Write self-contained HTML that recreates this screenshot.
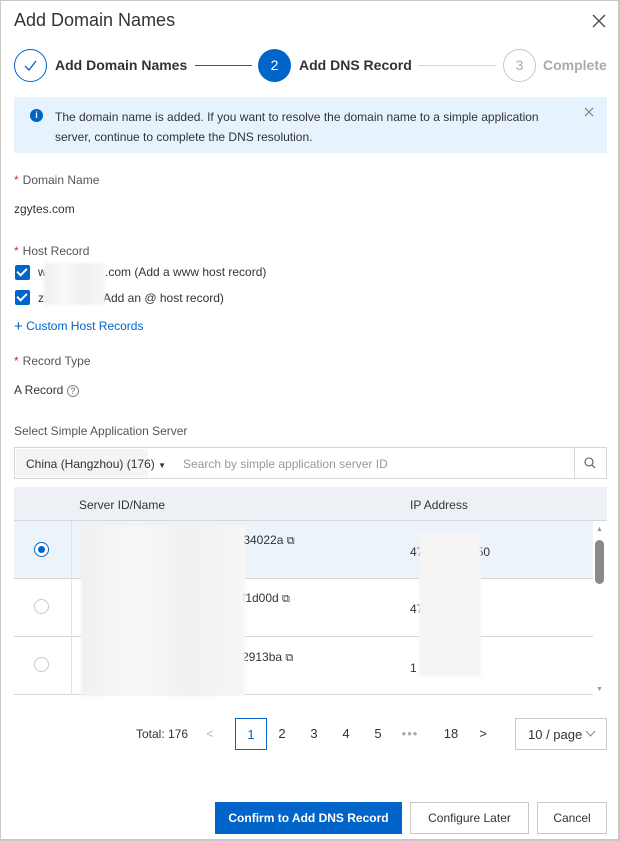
<!DOCTYPE html>
<html><head><meta charset="utf-8"><style>
*{box-sizing:border-box;margin:0;padding:0}
body{width:620px;height:841px;background:#fff;font-family:"Liberation Sans",sans-serif;color:#333;font-size:12px;position:relative;overflow:hidden}
.frame{position:absolute;inset:0;border:1px solid #c8c8c8;border-right:2px solid #c8c8c8;border-bottom:2px solid #c8c8c8}
.abs{position:absolute;white-space:nowrap}
.req{color:#d93026;margin-right:4px}
.lbl{color:#555;font-size:12px}
.cb{position:absolute;width:15px;height:15px;background:#0064c8;border-radius:2px}
.cb:after{content:"";position:absolute;left:4px;top:1px;width:4px;height:8px;border:solid #fff;border-width:0 2px 2px 0;transform:rotate(45deg)}
.radio{position:absolute;width:15px;height:15px;border-radius:50%;border:1px solid #c8c8c8;background:#fff}
.blur{position:absolute;background:linear-gradient(90deg,#f0f0f0,#f8f8f8,#f0f0f0,#f7f7f7);filter:blur(1px)}
.pg{position:absolute;top:718px;width:32px;height:32px;line-height:32px;text-align:center;font-size:13px;color:#333}
.btn{position:absolute;top:802px;height:32px;line-height:30px;text-align:center;font-size:12px;border:1px solid #c8c8c8;color:#333;background:#fff}
</style></head><body>
<div class="frame"></div>
<div class="abs" style="left:14px;top:10px;font-size:18px;color:#333">Add Domain Names</div>
<svg class="abs" style="left:592px;top:14px" width="14" height="14"><path d="M1 1L13 13M13 1L1 13" stroke="#555" stroke-width="1.5"/></svg>
<div class="abs" style="left:14px;top:49px;width:33px;height:33px;border:1.5px solid #0064c8;border-radius:50%"></div>
<svg class="abs" style="left:23px;top:58px" width="15" height="15"><path d="M2 8L6 12L13 3" stroke="#0064c8" stroke-width="1.3" fill="none"/></svg>
<div class="abs" style="left:55px;top:57px;font-size:14px;font-weight:bold;color:#333">Add Domain Names</div>
<div class="abs" style="left:195px;top:65px;width:57px;height:1px;background:#0064c8"></div>
<div class="abs" style="left:258px;top:49px;width:33px;height:33px;background:#0064c8;border-radius:50%;color:#fff;text-align:center;line-height:33px;font-size:14px">2</div>
<div class="abs" style="left:299px;top:57px;font-size:14px;font-weight:bold;color:#333">Add DNS Record</div>
<div class="abs" style="left:418px;top:65px;width:78px;height:1px;background:#d6d6d6"></div>
<div class="abs" style="left:503px;top:49px;width:33px;height:33px;border:1px solid #c8c8c8;border-radius:50%;color:#aaa;text-align:center;line-height:31px;font-size:14px">3</div>
<div class="abs" style="left:543px;top:57px;font-size:14px;font-weight:bold;color:#aaa">Complete</div>
<div class="abs" style="left:14px;top:97px;width:593px;height:56px;background:#e6f2fd"></div>
<div class="abs" style="left:30px;top:109px;width:13px;height:13px;border-radius:50%;background:#0064c8;color:#fff;font-size:9px;text-align:center;line-height:13px;font-weight:bold">i</div>
<div class="abs" style="left:55px;top:107px;font-size:12px;color:#333;line-height:20px">The domain name is added. If you want to resolve the domain name to a simple application<br>server, continue to complete the DNS resolution.</div>
<svg class="abs" style="left:584px;top:107px" width="10" height="10"><path d="M1 1L9 9M9 1L1 9" stroke="#777" stroke-width="1.1"/></svg>
<div class="abs lbl" style="left:14px;top:173px"><span class="req">*</span>Domain Name</div>
<div class="abs" style="left:14px;top:202px;color:#333">zgytes.com</div>
<div class="abs lbl" style="left:14px;top:244px"><span class="req">*</span>Host Record</div>
<div class="cb" style="left:15px;top:265px"></div>
<div class="abs" style="left:38px;top:265px">w</div>
<div class="abs" style="left:105px;top:265px">.com (Add a www host record)</div>
<div class="cb" style="left:15px;top:290px"></div>
<div class="abs" style="left:38px;top:291px">z</div>
<div class="abs" style="left:103px;top:291px">Add an @ host record)</div>
<div class="blur" style="left:44px;top:263px;width:61px;height:42px"></div>
<div class="abs" style="left:14px;top:318px;color:#0064c8"><span style="font-size:15px;vertical-align:-1px">+</span> Custom Host Records</div>
<div class="abs lbl" style="left:14px;top:354px"><span class="req">*</span>Record Type</div>
<div class="abs" style="left:14px;top:383px">A Record <span style="display:inline-block;width:12px;height:12px;border:1px solid #888;border-radius:50%;font-size:9px;text-align:center;line-height:10px;color:#666">?</span></div>
<div class="abs lbl" style="left:14px;top:424px">Select Simple Application Server</div>
<div class="abs" style="left:14px;top:447px;width:593px;height:32px;border:1px solid #d6d6d6"></div>
<div class="abs" style="left:16px;top:449px;width:132px;height:28px;background:#f3f4f6"></div>
<div class="abs" style="left:26px;top:457px">China (Hangzhou) (176) <span style="font-size:8px">▼</span></div>
<div class="abs" style="left:183px;top:457px;color:#999">Search by simple application server ID</div>
<div class="abs" style="left:574px;top:448px;width:1px;height:30px;background:#d6d6d6"></div>
<svg class="abs" style="left:584px;top:457px" width="12" height="12"><circle cx="5" cy="5" r="4" stroke="#555" fill="none" stroke-width="1.1"/><path d="M8 8L11 11" stroke="#555" stroke-width="1.1"/></svg>
<div class="abs" style="left:14px;top:487px;width:593px;height:34px;background:#edf0f5;border-bottom:1px solid #d6d6d6"></div>
<div class="abs" style="left:79px;top:498px;color:#333">Server ID/Name</div>
<div class="abs" style="left:410px;top:498px;color:#333">IP Address</div>
<div class="abs" style="left:14px;top:521px;width:579px;height:58px;background:#edf3fb;border-bottom:1px solid #d6d6d6"></div>
<div class="abs" style="left:14px;top:579px;width:579px;height:58px;border-bottom:1px solid #d6d6d6"></div>
<div class="abs" style="left:14px;top:637px;width:579px;height:58px;border-bottom:1px solid #d6d6d6"></div>
<div class="abs" style="left:71px;top:521px;width:1px;height:174px;background:#e3e3e3"></div>
<div class="radio" style="left:34px;top:542px;border-color:#0064c8"><div style="position:absolute;left:3px;top:3px;width:7px;height:7px;border-radius:50%;background:#0064c8"></div></div>
<div class="radio" style="left:34px;top:599px"></div>
<div class="radio" style="left:34px;top:657px"></div>
<div class="abs" style="left:240px;top:533px">:34022a <span style="font-size:11px">⧉</span></div>
<div class="abs" style="left:242px;top:591px">f1d00d <span style="font-size:11px">⧉</span></div>
<div class="abs" style="left:242px;top:650px">2913ba <span style="font-size:11px">⧉</span></div>
<div class="abs" style="left:410px;top:545px">47&nbsp;&nbsp;&nbsp;&nbsp;&nbsp;&nbsp;&nbsp;&nbsp;&nbsp;&nbsp;&nbsp;&nbsp;&nbsp;&nbsp;&nbsp;&nbsp;50</div>
<div class="abs" style="left:410px;top:602px">47</div>
<div class="abs" style="left:410px;top:661px">1</div>
<div class="blur" style="left:81px;top:526px;width:164px;height:170px"></div>
<div class="blur" style="left:419px;top:532px;width:62px;height:144px;background:#f5f5f5"></div>
<div class="abs" style="left:596px;top:526px;font-size:7px;color:#999">▲</div>
<div class="abs" style="left:595px;top:540px;width:9px;height:44px;background:#8a8a8a;border-radius:5px"></div>
<div class="abs" style="left:596px;top:686px;font-size:7px;color:#999">▼</div>
<div class="abs" style="left:136px;top:727px">Total: 176</div>
<div class="pg" style="left:194px;color:#bbb">&lt;</div>
<div class="pg" style="left:235px;border:1px solid #0064c8;color:#0064c8">1</div>
<div class="pg" style="left:266px">2</div>
<div class="pg" style="left:298px">3</div>
<div class="pg" style="left:330px">4</div>
<div class="pg" style="left:362px">5</div>
<div class="pg" style="left:394px;color:#aaa;letter-spacing:1px">•••</div>
<div class="pg" style="left:435px">18</div>
<div class="pg" style="left:467px">&gt;</div>
<div class="abs" style="left:515px;top:718px;width:92px;height:32px;border:1px solid #c8c8c8"></div>
<div class="abs" style="left:528px;top:727px;font-size:13px">10 / page</div>
<svg class="abs" style="left:585px;top:730px" width="11" height="7"><path d="M1 1L5.5 6L10 1" stroke="#888" fill="none"/></svg>
<div class="btn" style="left:215px;width:187px;background:#0064c8;border-color:#0064c8;color:#fff;font-weight:bold">Confirm to Add DNS Record</div>
<div class="btn" style="left:410px;width:119px">Configure Later</div>
<div class="btn" style="left:537px;width:70px">Cancel</div>
</body></html>
